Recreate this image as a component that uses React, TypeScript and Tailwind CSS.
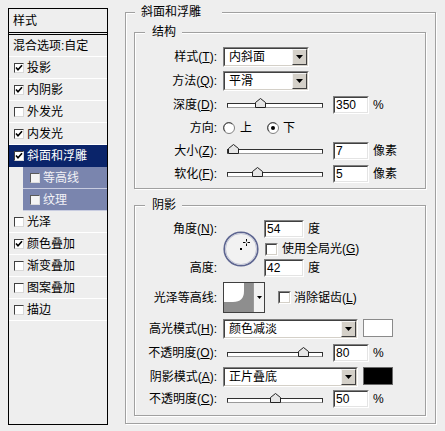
import React from 'react';

type Item = { label: string; checked?: boolean; selected?: boolean; sub?: boolean };

// Layer style list on the left
const ITEMS: Item[] = [
    { label: '投影', checked: true },
    { label: '内阴影', checked: true },
    { label: '外发光' },
    { label: '内发光', checked: true },
    { label: '斜面和浮雕', checked: true, selected: true },
    { label: '等高线', sub: true },
    { label: '纹理', sub: true },
    { label: '光泽' },
    { label: '颜色叠加', checked: true },
    { label: '渐变叠加' },
    { label: '图案叠加' },
    { label: '描边' },
];

const Tick = () => (
    <svg width="8" height="8" viewBox="0 0 8 8" className="block">
        <path d="M1 3.5 L3 5.8 L7 1.2" fill="none" stroke="#000" strokeWidth="1.6" />
    </svg>
);

const ListCheck = ({ checked, sub }: { checked?: boolean; sub?: boolean }) => (
    <div
        className={
            sub
                ? 'w-[10px] h-[10px] shrink-0 bg-[#f4f4f4] border border-t-[#5a5a5a] border-l-[#5a5a5a] border-r-[#dddddd] border-b-[#dddddd]'
                : 'w-[10px] h-[10px] shrink-0 bg-white border border-t-[#404040] border-l-[#404040] border-r-[#d8d8d8] border-b-[#d8d8d8] flex items-center justify-center'
        }
    >
        {checked && <Tick />}
    </div>
);

// Classic sunken 3d checkbox for the settings pane
const Check3D = () => (
    <div className="w-[13px] h-[13px] shrink-0 border border-t-[#808080] border-l-[#808080] border-r-white border-b-white">
        <div className="w-full h-full bg-white border border-t-[#404040] border-l-[#404040] border-r-[#d4d0c8] border-b-[#d4d0c8]" />
    </div>
);

const Radio = ({ checked }: { checked?: boolean }) => (
    <svg width="12" height="12" viewBox="0 0 12 12" className="block shrink-0">
        <circle cx="6" cy="6" r="5.5" fill="#fff" stroke="#808080" />
        <path d="M2.2 9.3 A4.6 4.6 0 0 1 9.3 2.2" fill="none" stroke="#404040" />
        {checked && <circle cx="6" cy="6" r="2" fill="#000" />}
    </svg>
);

const NumBox = ({ value, className }: { value: string; className: string }) => (
    <div className={`${className} border border-t-[#808080] border-l-[#808080] border-r-white border-b-white`}>
        <div className="h-full bg-white border border-t-[#404040] border-l-[#404040] border-r-[#e4e4e4] border-b-[#e4e4e4] flex items-center pl-[1px]">
            {value}
        </div>
    </div>
);

const Arrow = () => (
    <svg width="7" height="4" viewBox="0 0 7 4" className="block">
        <path d="M0 0H7L3.5 4Z" fill="#000" />
    </svg>
);

const Select = ({ value, className }: { value: string; className: string }) => (
    <div className={`${className} border border-t-[#808080] border-l-[#808080] border-r-white border-b-white`}>
        <div className="h-full bg-white border border-t-[#404040] border-l-[#404040] border-r-[#d4d0c8] border-b-[#d4d0c8] flex items-center">
            <span className="flex-1 pl-[4px]">{value}</span>
            <div className="w-[15px] h-full bg-[#d4d0c8] border border-t-[#f4f4f4] border-l-[#f4f4f4] border-r-[#404040] border-b-[#404040] flex items-center justify-center">
                <Arrow />
            </div>
        </div>
    </div>
);

const Slider = ({ pct }: { pct: number }) => (
    <div className="ml-[4px] w-[96px] h-full flex items-center">
        <div className="relative w-full h-[5px] mt-[2px] bg-white border border-[#303030] border-b-[#9a9a9a]">
            <svg
                className="absolute bottom-[-1px] block"
                style={{ left: `calc(${pct}% - 5.5px)` }}
                width="11"
                height="10"
                viewBox="0 0 11 10"
            >
                <path d="M0.5 9.5V4.5L5.5 0.5L10.5 4.5V9.5Z" fill="#e6e6e6" stroke="#222" />
            </svg>
        </div>
    </div>
);

const Row = ({ label, className, children }: { label: React.ReactNode; className: string; children: React.ReactNode }) => (
    <div className={`flex items-center ${className}`}>
        <div className="w-[82px] shrink-0 text-right">{label}</div>
        <div className="ml-[6px] h-full flex items-center">{children}</div>
    </div>
);

const SliderRow = ({ label, pct, value, unit, className }: { label: React.ReactNode; pct: number; value: string; unit: string; className: string }) => (
    <Row label={label} className={className}>
        <Slider pct={pct} />
        <NumBox value={value} className="ml-[10px] w-[36px] h-[18px]" />
        <span className="ml-[4px]">{unit}</span>
    </Row>
);

const AngleDial = () => (
    <svg width="36" height="36" viewBox="0 0 36 36" className="block">
        <circle cx="18" cy="18" r="16.8" fill="#f2f2f2" stroke="#5d6590" strokeWidth="1.6" />
        <circle cx="18" cy="18" r="15.5" fill="none" stroke="#b4b8cc" strokeWidth="0.8" />
        <rect x="17" y="17" width="2" height="2" fill="#000" />
        <path d="M23.5 8V10.5M23.5 12.5V15M20 11.5H22.5M24.5 11.5H27" stroke="#000" strokeWidth="1" />
    </svg>
);

const ContourThumb = () => (
    <div className="h-[31px] flex border border-[#404040]">
        <svg width="29" height="29" viewBox="0 0 29 29" className="block bg-white">
            <path d="M20 0H29V29H0V19H9Q20 19 20 8Z" fill="#8e8e8e" />
        </svg>
        <div className="w-[11px] bg-[#f2f2f2] border-l border-[#9a9a9a] flex items-center justify-center">
            <svg width="5" height="3" viewBox="0 0 5 3" className="block">
                <path d="M0 0H5L2.5 3Z" fill="#000" />
            </svg>
        </div>
    </div>
);

const groupBox = 'border border-[#a0a0a0] shadow-[inset_1px_1px_0_#fff,1px_1px_0_#fff] min-w-0';

export default function App() {
    return (
        <div className="w-[445px] h-[431px] bg-[#eeeeee] flex items-start pt-[5px] pl-[8px] text-[12px] leading-[14px] text-black font-['Liberation_Sans','Noto_Sans_CJK_SC',sans-serif]">
            {/* Style list */}
            <div className="mt-[3px] w-[100px] h-[417px] border border-black bg-[#eeeeee] flex flex-col">
                <div className="h-[26px] shrink-0 flex items-center pl-[4px] border-b-[3px] border-double border-black">样式</div>
                <div className="h-[22px] shrink-0 flex items-center pl-[4px] border-b border-white">混合选项:自定</div>
                {ITEMS.map((item, i) =>
                    item.sub ? (
                        <div key={i} className="h-[22px] shrink-0 ml-[14px] bg-[#7a85ae] text-[#f2f2f6] flex items-center gap-[3px] pl-[7px] border-b border-[#c8cce0]">
                            <ListCheck sub />
                            <span>{item.label}</span>
                        </div>
                    ) : (
                        <div
                            key={i}
                            className={
                                item.selected
                                    ? 'h-[22px] shrink-0 bg-[#0a246a] text-white flex items-center gap-[3px] pl-[5px]'
                                    : 'h-[22px] shrink-0 flex items-center gap-[3px] pl-[5px] border-b border-white'
                            }
                        >
                            <ListCheck checked={item.checked} />
                            <span>{item.label}</span>
                        </div>
                    )
                )}
            </div>

            {/* Bevel and emboss settings */}
            <fieldset className={`ml-[17px] w-[311px] pl-[8px] pr-[9px] pt-[6px] pb-[7px] ${groupBox}`}>
                <legend className="ml-[1px] pl-[6px] pr-[21px] bg-[#eeeeee]">斜面和浮雕</legend>

                <fieldset className={`pt-[8px] pb-[5px] flex flex-col gap-[4px] ${groupBox}`}>
                    <legend className="ml-[10px] pl-[7px] pr-[6px] bg-[#eeeeee]">结构</legend>
                    <Row label={<>样式(<u>T</u>):</>} className="h-[20px]">
                        <Select value="内斜面" className="w-[86px] h-[20px]" />
                    </Row>
                    <Row label={<>方法(<u>Q</u>):</>} className="h-[20px]">
                        <Select value="平滑" className="w-[86px] h-[20px]" />
                    </Row>
                    <SliderRow label={<>深度(<u>D</u>):</>} pct={35} value="350" unit="%" className="h-[19px]" />
                    <Row label="方向:" className="h-[19px]">
                        <Radio />
                        <span className="ml-[5px]">上</span>
                        <span className="ml-[15px]"><Radio checked /></span>
                        <span className="ml-[4px]">下</span>
                    </Row>
                    <SliderRow label={<>大小(<u>Z</u>):</>} pct={6} value="7" unit="像素" className="h-[19px]" />
                    <SliderRow label={<>软化(<u>F</u>):</>} pct={31} value="5" unit="像素" className="h-[19px]" />
                </fieldset>

                <fieldset className={`mt-[9px] pt-[8px] pb-[7px] flex flex-col ${groupBox}`}>
                    <legend className="ml-[10px] pl-[7px] pr-[6px] bg-[#eeeeee]">阴影</legend>

                    <div className="flex">
                        <div className="w-[82px] shrink-0 flex flex-col justify-between items-end">
                            <div className="h-[18px] flex items-center">角度(<u>N</u>):</div>
                            <div className="h-[18px] flex items-center">高度:</div>
                        </div>
                        <div className="ml-[6px] w-[41px] flex items-center">
                            <AngleDial />
                        </div>
                        <div className="flex flex-col">
                            <div className="h-[18px] flex items-center">
                                <NumBox value="54" className="w-[40px] h-[18px]" />
                                <span className="ml-[4px]">度</span>
                            </div>
                            <div className="mt-[3px] h-[16px] flex items-center">
                                <span className="ml-[1px]"><Check3D /></span>
                                <span className="ml-[4px]">使用全局光(<u>G</u>)</span>
                            </div>
                            <div className="mt-[2px] h-[18px] flex items-center">
                                <NumBox value="42" className="w-[40px] h-[18px]" />
                                <span className="ml-[4px]">度</span>
                            </div>
                        </div>
                    </div>

                    <Row label="光泽等高线:" className="mt-[5px] h-[31px]">
                        <ContourThumb />
                        <span className="ml-[13px]"><Check3D /></span>
                        <span className="ml-[3px]">消除锯齿(<u>L</u>)</span>
                    </Row>

                    <Row label={<>高光模式(<u>H</u>):</>} className="mt-[6px] h-[20px]">
                        <Select value="颜色减淡" className="w-[135px] h-[20px]" />
                        <div className="ml-[5px] self-start w-[30px] h-[18px] bg-white border border-[#8a8a8a]" />
                    </Row>
                    <SliderRow label={<>不透明度(<u>O</u>):</>} pct={80} value="80" unit="%" className="mt-[5px] h-[18px]" />
                    <Row label={<>阴影模式(<u>A</u>):</>} className="mt-[5px] h-[20px]">
                        <Select value="正片叠底" className="w-[135px] h-[20px]" />
                        <div className="ml-[5px] self-start w-[30px] h-[18px] bg-black border border-[#6a6a6a]" />
                    </Row>
                    <SliderRow label={<>不透明度(<u>C</u>):</>} pct={50} value="50" unit="%" className="mt-[3px] h-[18px]" />
                </fieldset>
            </fieldset>
        </div>
    );
}
